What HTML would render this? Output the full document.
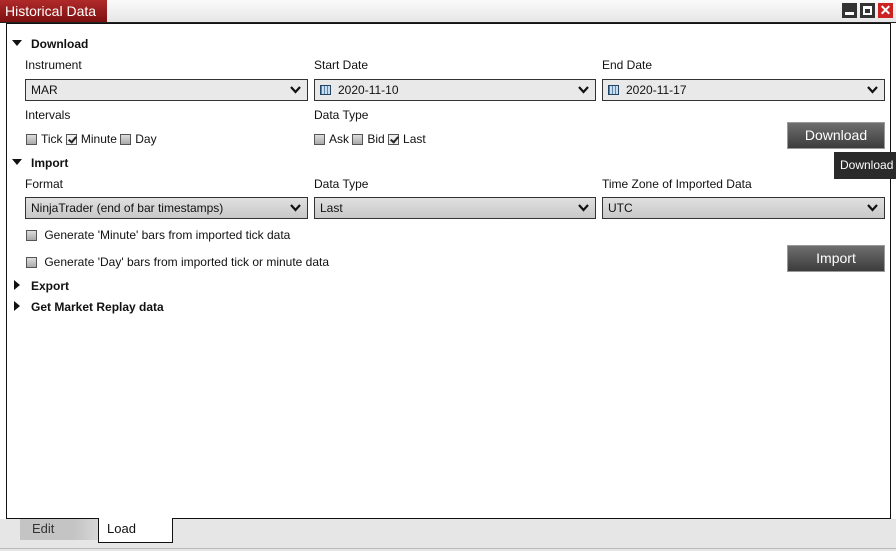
<!DOCTYPE html>
<html><head><style>
body{margin:0;width:896px;height:551px;overflow:hidden;background:#fff;font-family:"Liberation Sans",Arial,sans-serif;font-size:12px;color:#111;position:relative}
.a{position:absolute;white-space:nowrap}
.top{left:0;top:0;width:896px;height:23px;background:linear-gradient(#fafafa,#e6e6e6);border-bottom:1px solid #222;box-sizing:border-box}
.title{left:0;top:0;width:107px;height:22px;background:linear-gradient(#b02a2a,#7e1010);color:#fff;font-size:14px;line-height:22px;padding-left:5px;box-sizing:border-box}
.main{left:6px;top:23px;width:885px;height:496px;border:1px solid #111;box-sizing:border-box;background:#fff}
.sel{height:22px;border:1px solid #333;background:#e9e9e9;box-sizing:border-box;line-height:20px;padding-left:5px}
.sel svg.v{position:absolute;right:6px;top:6px}
.cb{display:inline-block;width:11px;height:11px;border:1px solid #555;background:linear-gradient(#ddd,#aaa);vertical-align:-2px;margin-right:4px;box-sizing:border-box;position:relative}
.cb.c{background:#eee}
.cb.c:after{content:"";position:absolute;left:3px;top:0px;width:3px;height:6px;border:solid #222;border-width:0 2px 2px 0;transform:rotate(40deg)}
.btn{width:98px;height:27px;background:linear-gradient(#6e6e6e,#3c3c3c);border:1px solid #999;box-sizing:border-box;color:#fff;font-size:14px;text-align:center;line-height:25px}
.b{font-weight:bold}
.cal{display:inline-block;width:11px;height:10px;border:1px solid #246;background:repeating-linear-gradient(90deg,#58a 0 1px,#cde 1px 3px);vertical-align:-1px;margin-right:7px;box-sizing:border-box}
</style></head><body>
<div class="a top"></div>
<div class="a title">Historical Data</div>
<div class="a" style="left:842px;top:3px;width:15px;height:15px;background:#333"><div style="position:absolute;left:3px;top:9px;width:9px;height:3px;background:#fff"></div></div>
<div class="a" style="left:860px;top:3px;width:15px;height:15px;background:#333"><div style="position:absolute;left:3px;top:3px;width:9px;height:9px;border:2px solid #fff;border-top-width:3px;box-sizing:border-box"></div></div>
<div class="a" style="left:878px;top:3px;width:15px;height:15px;background:#c22;color:#fff;font-weight:bold;font-size:14px;line-height:15px;text-align:center">✕</div>
<div class="a main"></div>

<svg class="a" style="left:12px;top:40px" width="10" height="7"><path d="M0 0H10L5 6Z" fill="#111"/></svg><div class="a b" style="left:31px;top:37px">Download</div>
<div class="a" style="left:25px;top:58px">Instrument</div>
<div class="a" style="left:314px;top:58px">Start Date</div>
<div class="a" style="left:602px;top:58px">End Date</div>
<div class="a sel" style="left:25px;top:79px;width:283px">MAR<svg class="v" width="11" height="8"><path d="M1 1L5.5 6L10 1" stroke="#111" stroke-width="2.2" fill="none"/></svg></div>
<div class="a sel" style="left:314px;top:79px;width:282px"><span class="cal"></span>2020-11-10<svg class="v" width="11" height="8"><path d="M1 1L5.5 6L10 1" stroke="#111" stroke-width="2.2" fill="none"/></svg></div>
<div class="a sel" style="left:602px;top:79px;width:283px"><span class="cal"></span>2020-11-17<svg class="v" width="11" height="8"><path d="M1 1L5.5 6L10 1" stroke="#111" stroke-width="2.2" fill="none"/></svg></div>
<div class="a" style="left:25px;top:108px">Intervals</div>
<div class="a" style="left:314px;top:108px">Data Type</div>
<div class="a" style="left:26px;top:132px"><span class="cb"></span>Tick <span class="cb c"></span>Minute <span class="cb"></span>Day</div>
<div class="a" style="left:314px;top:132px"><span class="cb"></span>Ask <span class="cb"></span>Bid <span class="cb c"></span>Last</div>
<div class="a btn" style="left:787px;top:122px">Download</div>
<div class="a" style="left:834px;top:152px;width:62px;height:27px;background:#2a2a2a;color:#fff;line-height:27px;padding-left:6px;box-sizing:border-box">Download</div>

<svg class="a" style="left:12px;top:159px" width="10" height="7"><path d="M0 0H10L5 6Z" fill="#111"/></svg><div class="a b" style="left:31px;top:156px">Import</div>
<div class="a" style="left:25px;top:177px">Format</div>
<div class="a" style="left:314px;top:177px">Data Type</div>
<div class="a" style="left:602px;top:177px">Time Zone of Imported Data</div>
<div class="a sel" style="left:25px;top:197px;width:283px;background:linear-gradient(#e0e0e0,#c8c8c8)">NinjaTrader (end of bar timestamps)<svg class="v" width="11" height="8"><path d="M1 1L5.5 6L10 1" stroke="#111" stroke-width="2.2" fill="none"/></svg></div>
<div class="a sel" style="left:314px;top:197px;width:282px;background:linear-gradient(#e0e0e0,#c8c8c8)">Last<svg class="v" width="11" height="8"><path d="M1 1L5.5 6L10 1" stroke="#111" stroke-width="2.2" fill="none"/></svg></div>
<div class="a sel" style="left:602px;top:197px;width:283px;background:linear-gradient(#e0e0e0,#c8c8c8)">UTC<svg class="v" width="11" height="8"><path d="M1 1L5.5 6L10 1" stroke="#111" stroke-width="2.2" fill="none"/></svg></div>
<div class="a" style="left:26px;top:228px"><span class="cb"></span> Generate 'Minute' bars from imported tick data</div>
<div class="a" style="left:26px;top:255px"><span class="cb"></span> Generate 'Day' bars from imported tick or minute data</div>
<div class="a btn" style="left:787px;top:245px">Import</div>

<svg class="a" style="left:14px;top:280px" width="7" height="10"><path d="M0 0V10L6 5Z" fill="#111"/></svg><div class="a b" style="left:31px;top:279px">Export</div>
<svg class="a" style="left:14px;top:301px" width="7" height="10"><path d="M0 0V10L6 5Z" fill="#111"/></svg><div class="a b" style="left:31px;top:300px">Get Market Replay data</div>

<div class="a" style="left:0;top:519px;width:896px;height:32px;background:#e6e6e6"></div>
<div class="a" style="left:0;top:548px;width:896px;height:1px;background:#bbb"></div>
<div class="a" style="left:20px;top:519px;width:55px;height:21px;background:#c4c4c4;padding-left:12px;line-height:20px;font-size:13px;color:#333;box-sizing:border-box">Edit</div>
<div class="a" style="left:74px;top:519px;width:26px;height:21px;background:linear-gradient(90deg,#c4c4c4,#d8d8d8)"></div>
<div class="a" style="left:98px;top:518px;width:75px;height:25px;background:#fff;border:1px solid #111;border-top:none;box-sizing:border-box;padding-left:8px;line-height:22px;font-size:13px">Load</div>
</body></html>
